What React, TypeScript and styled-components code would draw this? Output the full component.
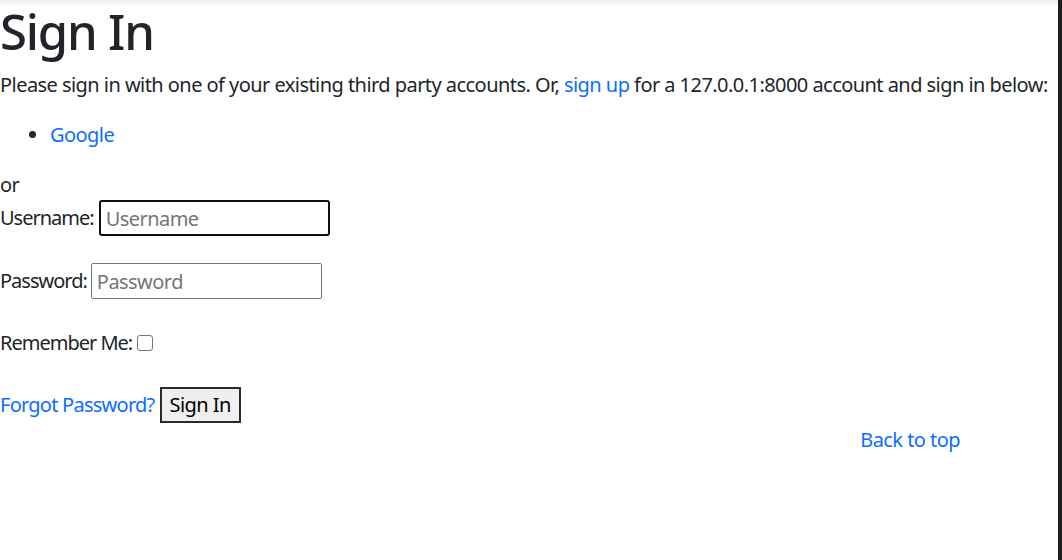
import React from "react";
import styled, { createGlobalStyle } from "styled-components";

const Global = createGlobalStyle`
  html, body { margin: 0; padding: 0; }
  body {
    font-family: "Noto Sans", "Open Sans", sans-serif;
    font-size: 20px;
    line-height: 30px;
    letter-spacing: -0.55px;
    color: #212529;
    background: linear-gradient(#ececec, #ffffff 7px) no-repeat #ffffff;
  }
  * { box-sizing: border-box; }
`;

const Shell = styled.div`
  display: flex;
  min-height: 100vh;
`;

const Main = styled.main`
  flex: 1;
  min-width: 0;
  display: flex;
  flex-direction: column;
`;

const ScrollEdge = styled.div`
  flex: 0 0 4px;
  background: #1c1c1c;
`;

const Title = styled.h1`
  margin: 0 0 10px;
  padding-top: 2px;
  height: 60px;
  font-size: 49px;
  line-height: 58px;
  font-weight: 500;
  letter-spacing: -1.2px;
`;

const Para = styled.p`
  margin: 0 0 20px;
  white-space: nowrap;
`;

const Link = styled.a`
  color: #0d6efd;
  text-decoration: none;
`;

const FormLink = styled(Link)`
  letter-spacing: -0.75px;
`;

const List = styled.ul`
  margin: 0 0 20px;
  padding-left: 50px;
`;

const Or = styled.div`
  height: 30px;
`;

const Row = styled.div<{ $gap: number; $top: number }>`
  display: flex;
  align-items: center;
  gap: ${(p) => p.$gap}px;
  height: 36px;
  margin-top: ${(p) => p.$top}px;
`;

const Label = styled.span`
  letter-spacing: -1px;
`;

const Input = styled.input<{ $focused?: boolean }>`
  width: 231px;
  height: 36px;
  padding: 0 5px;
  font: inherit;
  font-size: 20px;
  letter-spacing: -0.55px;
  color: #212529;
  background: #fff;
  border: ${(p) => (p.$focused ? "2px solid #101010" : "1px solid #767676")};
  border-radius: ${(p) => (p.$focused ? "3px" : "2px")};
  outline: none;
  &::placeholder { color: #757575; }
`;

const Check = styled.input`
  appearance: none;
  width: 16px;
  height: 16px;
  margin: 0;
  border: 1px solid #767676;
  border-radius: 3px;
  background: #fff;
`;

const Button = styled.button`
  height: 36px;
  padding: 0 8px;
  font: inherit;
  font-size: 20px;
  letter-spacing: -0.55px;
  color: #000;
  background: #efefef;
  border: 2px solid #2a2a2a;
  border-radius: 0;
`;

const Footer = styled.div`
  display: flex;
  justify-content: flex-end;
  padding-right: 98px;
  margin-top: 2px;
`;

export default function App() {
  return (
    <>
      <Global />
      <Shell>
        <Main>
          <Title>Sign In</Title>
          <Para>
            Please sign in with one of your existing third party accounts. Or, <Link href="#">sign up</Link> for a
            127.0.0.1:8000 account and sign in below:
          </Para>
          <List>
            <li>
              <Link href="#">Google</Link>
            </li>
          </List>
          <Or>or</Or>
          <Row $gap={5} $top={0}>
            <Label>Username:</Label>
            <Input $focused placeholder="Username" />
          </Row>
          <Row $gap={4} $top={27}>
            <Label>Password:</Label>
            <Input type="password" placeholder="Password" />
          </Row>
          <Row $gap={5} $top={26}>
            <Label>Remember Me:</Label>
            <Check type="checkbox" />
          </Row>
          <Row $gap={5} $top={26}>
            <FormLink href="#">Forgot Password?</FormLink>
            <Button>Sign In</Button>
          </Row>
          <Footer>
            <Link href="#">Back to top</Link>
          </Footer>
        </Main>
        <ScrollEdge />
      </Shell>
    </>
  );
}
